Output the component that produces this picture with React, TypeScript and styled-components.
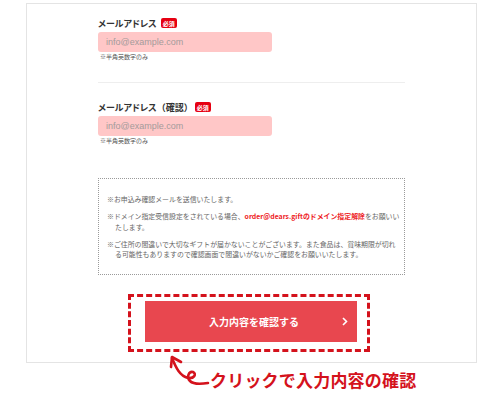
import styled, { createGlobalStyle } from "styled-components";

const GlobalStyle = createGlobalStyle`
  body {
    margin: 0;
    background: #fff;
    font-family: "Noto Sans CJK JP", "Noto Sans", sans-serif;
    color: #333;
  }
`;

const Page = styled.div`
  position: relative;
  width: 500px;
  height: 400px;
  overflow: hidden;
`;

const Card = styled.div`
  margin: 3px 0 0 26px;
  width: 451px;
  height: 360px;
  border: 1px solid #e4e4e4;
  box-sizing: border-box;
  padding: 13px 0 0 71px;
`;

const Field = styled.div`
  display: flex;
  flex-direction: column;
  width: 307px;
`;

const Label = styled.div`
  display: flex;
  align-items: center;
  gap: 4px;
  height: 12px;
  font-size: 9px;
  font-weight: 700;
  color: #333;
  font-feature-settings: "palt";
`;

const Paren = styled.span`
  font-feature-settings: normal;
`;

const Badge = styled.span<{ $gap?: number }>`
  margin-left: ${(p) => p.$gap ?? 0}px;
  background: #e60012;
  color: #fff;
  font-size: 6px;
  font-weight: 700;
  padding: 1.5px 2px;
  border-radius: 2px;
  line-height: 7px;
`;

const Input = styled.div`
  margin-top: 3px;
  width: 174px;
  height: 20px;
  border-radius: 3px;
  background: #ffc7c7;
  box-sizing: border-box;
  padding-left: 8px;
  display: flex;
  align-items: center;
  font-family: "Liberation Sans", Arial, sans-serif;
  font-size: 9px;
  color: #a39b9b;
`;

const Note = styled.div`
  font-size: 6px;
  line-height: 9px;
  color: #555;
  padding-left: 2px;
`;

const Divider = styled.hr`
  width: 307px;
  margin: 21px 0 18px;
  border: none;
  border-top: 1px solid #eeeeee;
`;

const InfoBox = styled.div`
  margin-top: 33px;
  width: 307px;
  height: 97px;
  box-sizing: border-box;
  border: 1px dotted #9a9a9a;
  padding: 15px 2px 0 8px;
  display: flex;
  flex-direction: column;
  gap: 6.5px;
`;

const InfoLine = styled.p`
  margin: 0;
  font-size: 6.9px;
  line-height: 10.5px;
  color: #666;
  padding-left: 8px;
  text-indent: -8px;
`;

const Strong = styled.span`
  color: #ee1c25;
  font-weight: 700;
`;

const Outline = styled.div`
  margin: 19px 0 0 30px;
  width: 242px;
  height: 58px;
  box-sizing: border-box;
  border: 3px dashed #d4121c;
  padding: 4px 10px 0 14px;
`;

const Button = styled.div`
  position: relative;
  height: 41px;
  background: #e8474f;
  display: flex;
  align-items: center;
  justify-content: center;
  padding-left: 6px;
  color: #fff;
  font-size: 10px;
  font-weight: 700;
`;

const Chevron = styled.svg`
  position: absolute;
  right: 9px;
  top: 16px;
`;

const Callout = styled.div`
  margin: 6px 0 0 210px;
  font-size: 17px;
  font-weight: 700;
  color: #d4121c;
  line-height: 22px;
  letter-spacing: 0.2px;
`;

const Arrow = styled.svg`
  position: absolute;
  left: 164px;
  top: 350px;
`;

export default function App() {
  return (
    <Page>
      <GlobalStyle />
      <Card>
        <Field>
          <Label>
            メールアドレス<Badge>必須</Badge>
          </Label>
          <Input>info@example.com</Input>
          <Note>※半角英数字のみ</Note>
        </Field>
        <Divider />
        <Field>
          <Label>
            <span>
              メールアドレス<Paren>（確認）</Paren>
            </span>
            <Badge $gap={-2}>必須</Badge>
          </Label>
          <Input>info@example.com</Input>
          <Note>※半角英数字のみ</Note>
        </Field>
        <InfoBox>
          <InfoLine>※お申込み確認メールを送信いたします。</InfoLine>
          <InfoLine>
            ※ドメイン指定受信設定をされている場合、
            <Strong>order@dears.giftのドメイン指定解除</Strong>をお願いいたします。
          </InfoLine>
          <InfoLine>
            ※ご住所の間違いで大切なギフトが届かないことがございます。また食品は、賞味期限が切れる可能性もありますので確認画面で間違いがないかご確認をお願いいたします。
          </InfoLine>
        </InfoBox>
        <Outline>
          <Button>
            入力内容を確認する
            <Chevron width="6" height="9" viewBox="0 0 6 9">
              <path d="M1 1 L4.5 4.5 L1 8" fill="none" stroke="#fff" strokeWidth="1.6" />
            </Chevron>
          </Button>
        </Outline>
      </Card>
      <Callout>クリックで入力内容の確認</Callout>
      <Arrow width="48" height="40" viewBox="0 0 48 40">
        <path
          d="M8 8 C12 18 16 26 24 28 C30 29 33 24 29 22 C25 21 22 27 26 31 C30 35 38 34 44 33"
          fill="none"
          stroke="#d4121c"
          strokeWidth="2.6"
          strokeLinecap="round"
        />
        <path
          d="M17 12 L8 7 L7 17"
          fill="none"
          stroke="#d4121c"
          strokeWidth="2.6"
          strokeLinecap="round"
          strokeLinejoin="round"
        />
      </Arrow>
    </Page>
  );
}
